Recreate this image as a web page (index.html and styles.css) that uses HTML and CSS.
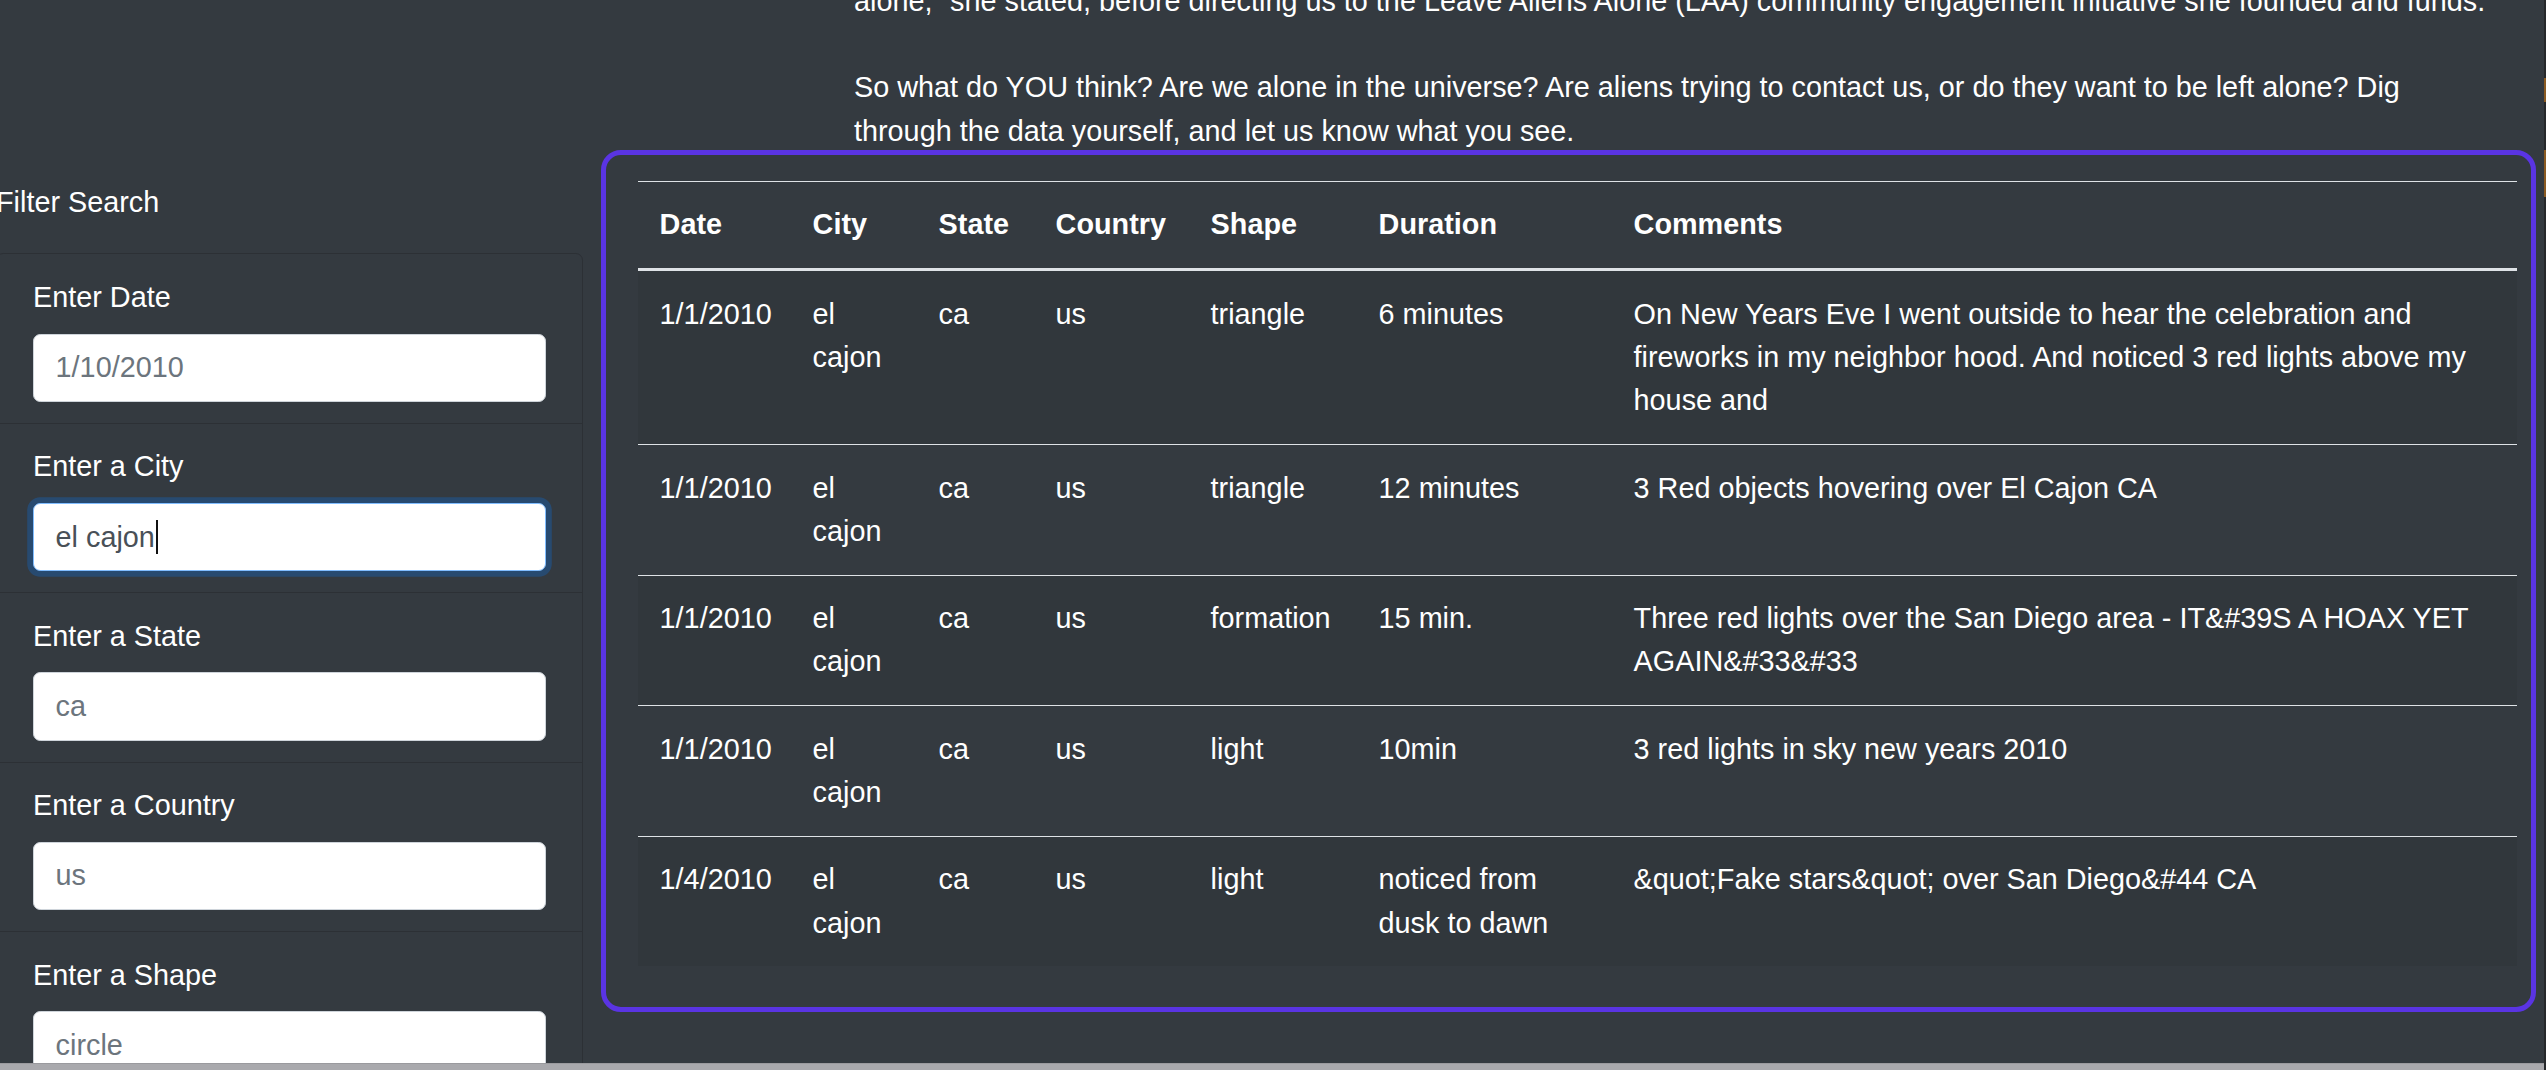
FILE: index.html
```html
<!DOCTYPE html>
<html lang="en">
<head>
<meta charset="utf-8">
<title>UFO Sightings</title>
<link rel="stylesheet" href="styles.css">
</head>
<body>
<div class="page">
  <section class="intro">
    <p class="story">alone,” she stated, before directing us to the Leave Aliens Alone (LAA) community engagement initiative she founded and funds.<br><br>So what do YOU think? Are we alone in the universe? Are aliens trying to contact us, or do they want to be left alone? Dig<br>through the data yourself, and let us know what you see.</p>
  </section>

  <div class="main">
    <aside class="filters">
      <p class="filters-title">Filter Search</p>
      <ul class="list-group">
        <li class="list-group-item">
          <label class="field-label" for="datetime">Enter Date</label>
          <input class="form-control" id="datetime" type="text" placeholder="1/10/2010">
        </li>
        <li class="list-group-item">
          <label class="field-label" for="city">Enter a City</label>
          <div class="form-control is-focused" id="city"><span class="typed">el cajon</span><span class="caret"></span></div>
        </li>
        <li class="list-group-item">
          <label class="field-label" for="state">Enter a State</label>
          <input class="form-control" id="state" type="text" placeholder="ca">
        </li>
        <li class="list-group-item">
          <label class="field-label" for="country">Enter a Country</label>
          <input class="form-control" id="country" type="text" placeholder="us">
        </li>
        <li class="list-group-item">
          <label class="field-label" for="shape">Enter a Shape</label>
          <input class="form-control" id="shape" type="text" placeholder="circle">
        </li>
      </ul>
    </aside>

    <div class="table-box">
      <table class="ufo-table">
        <colgroup>
          <col class="c-date">
          <col class="c-city">
          <col class="c-state">
          <col class="c-country">
          <col class="c-shape">
          <col class="c-duration">
          <col class="c-comments">
        </colgroup>
        <thead>
          <tr>
            <th>Date</th>
            <th>City</th>
            <th>State</th>
            <th>Country</th>
            <th>Shape</th>
            <th>Duration</th>
            <th>Comments</th>
          </tr>
        </thead>
        <tbody>
          <tr>
            <td>1/1/2010</td>
            <td>el cajon</td>
            <td>ca</td>
            <td>us</td>
            <td>triangle</td>
            <td>6 minutes</td>
            <td>On New Years Eve I went outside to hear the celebration and fireworks in my neighbor hood. And noticed 3 red lights above my house and</td>
          </tr>
          <tr>
            <td>1/1/2010</td>
            <td>el cajon</td>
            <td>ca</td>
            <td>us</td>
            <td>triangle</td>
            <td>12 minutes</td>
            <td>3 Red objects hovering over El Cajon CA</td>
          </tr>
          <tr>
            <td>1/1/2010</td>
            <td>el cajon</td>
            <td>ca</td>
            <td>us</td>
            <td>formation</td>
            <td>15 min.</td>
            <td>Three red lights over the San Diego area - IT&amp;#39S A HOAX YET AGAIN&amp;#33&amp;#33</td>
          </tr>
          <tr>
            <td>1/1/2010</td>
            <td>el cajon</td>
            <td>ca</td>
            <td>us</td>
            <td>light</td>
            <td>10min</td>
            <td>3 red lights in sky new years 2010</td>
          </tr>
          <tr>
            <td>1/4/2010</td>
            <td>el cajon</td>
            <td>ca</td>
            <td>us</td>
            <td>light</td>
            <td>noticed from dusk to dawn</td>
            <td>&amp;quot;Fake stars&amp;quot; over San Diego&amp;#44 CA</td>
          </tr>
        </tbody>
      </table>
    </div>
  </div>
</div>
<div class="hscroll"></div>
<div class="edge-strip"></div>
</body>
</html>
```

FILE: styles.css
```css
html, body {
  margin: 0;
  padding: 0;
  height: 100%;
  overflow: hidden;
}

body {
  background: #343a40;
  color: #fff;
  font-family: "Liberation Sans", Arial, sans-serif;
  font-size: 28.8px;
  line-height: 43.2px;
}

*, *::before, *::after {
  box-sizing: border-box;
}

/* intro text (page is scrolled, first line is cut) */
.intro {
  margin-top: -20px;
  padding-left: 854px;
}

.story {
  margin: 0;
  white-space: nowrap;
}

/* main row */
.main {
  display: flex;
  align-items: flex-start;
  gap: 18px;
  margin-left: -4px;
  margin-right: 10px;
}

/* filters sidebar */
.filters {
  flex: none;
  width: 587px;
  padding-top: 28.6px;
}

.filters-title {
  margin: 0 0 28.8px 0;
}

.list-group {
  list-style: none;
  margin: 0;
  padding: 0;
}

.list-group-item {
  background: #343a40;
  border: 1.8px solid #2c3035;
  padding: 21.6px 36px;
  margin-top: -1.8px;
}

.list-group-item:first-child {
  margin-top: 0;
  border-top-left-radius: 7.2px;
  border-top-right-radius: 7.2px;
}

.field-label {
  display: inline-block;
  margin-bottom: 14.4px;
}

.form-control {
  display: block;
  width: 100%;
  height: 68.4px;
  padding: 10.8px 21.6px;
  font-family: inherit;
  font-size: 28.8px;
  line-height: 43.2px;
  color: #495057;
  background: #fff;
  border: 1.8px solid #ced4da;
  border-radius: 7.2px;
  outline: none;
  margin: 0;
}

.form-control::placeholder {
  color: #6c757d;
  opacity: 1;
}

.form-control.is-focused {
  border-color: #80bdff;
  box-shadow: 0 0 0 5.8px rgba(0, 123, 255, 0.25);
  display: flex;
  align-items: center;
}

.caret {
  display: inline-block;
  width: 2px;
  height: 34px;
  background: #111;
  margin-left: 1px;
}

/* table box */
.table-box {
  flex: 1;
  margin-top: -3px;
  border: 5px solid #5a34e3;
  border-radius: 20px;
  padding: 26px 14px 41px 32px;
}

.ufo-table {
  width: 100%;
  border-collapse: collapse;
  table-layout: fixed;
  color: #fff;
}

.c-date { width: 153px; }
.c-city { width: 126px; }
.c-state { width: 117px; }
.c-country { width: 155px; }
.c-shape { width: 168px; }
.c-duration { width: 255px; }

.ufo-table th,
.ufo-table td {
  padding: 21.6px;
  vertical-align: top;
  text-align: left;
  border-top: 1.8px solid #dee2e6;
}

.ufo-table thead th {
  vertical-align: bottom;
  font-weight: 700;
  border-bottom: 3.6px solid #dee2e6;
}

.ufo-table tbody tr:nth-child(odd) {
  background: rgba(0, 0, 0, 0.05);
}

/* browser chrome bits visible in the capture */
.hscroll {
  position: fixed;
  left: 0;
  right: 0;
  bottom: 0;
  height: 7px;
  background: #a9a9ad;
  border-top: 1px solid #9a9a9e;
}

.edge-strip {
  position: fixed;
  top: 0;
  right: 0;
  width: 2px;
  height: 100%;
  background: linear-gradient(to bottom, #26282b 0 78px, #8a5a22 78px 102px, #26282b 102px 150px, #8a5a22 150px 197px, #26282b 197px);
}
```
